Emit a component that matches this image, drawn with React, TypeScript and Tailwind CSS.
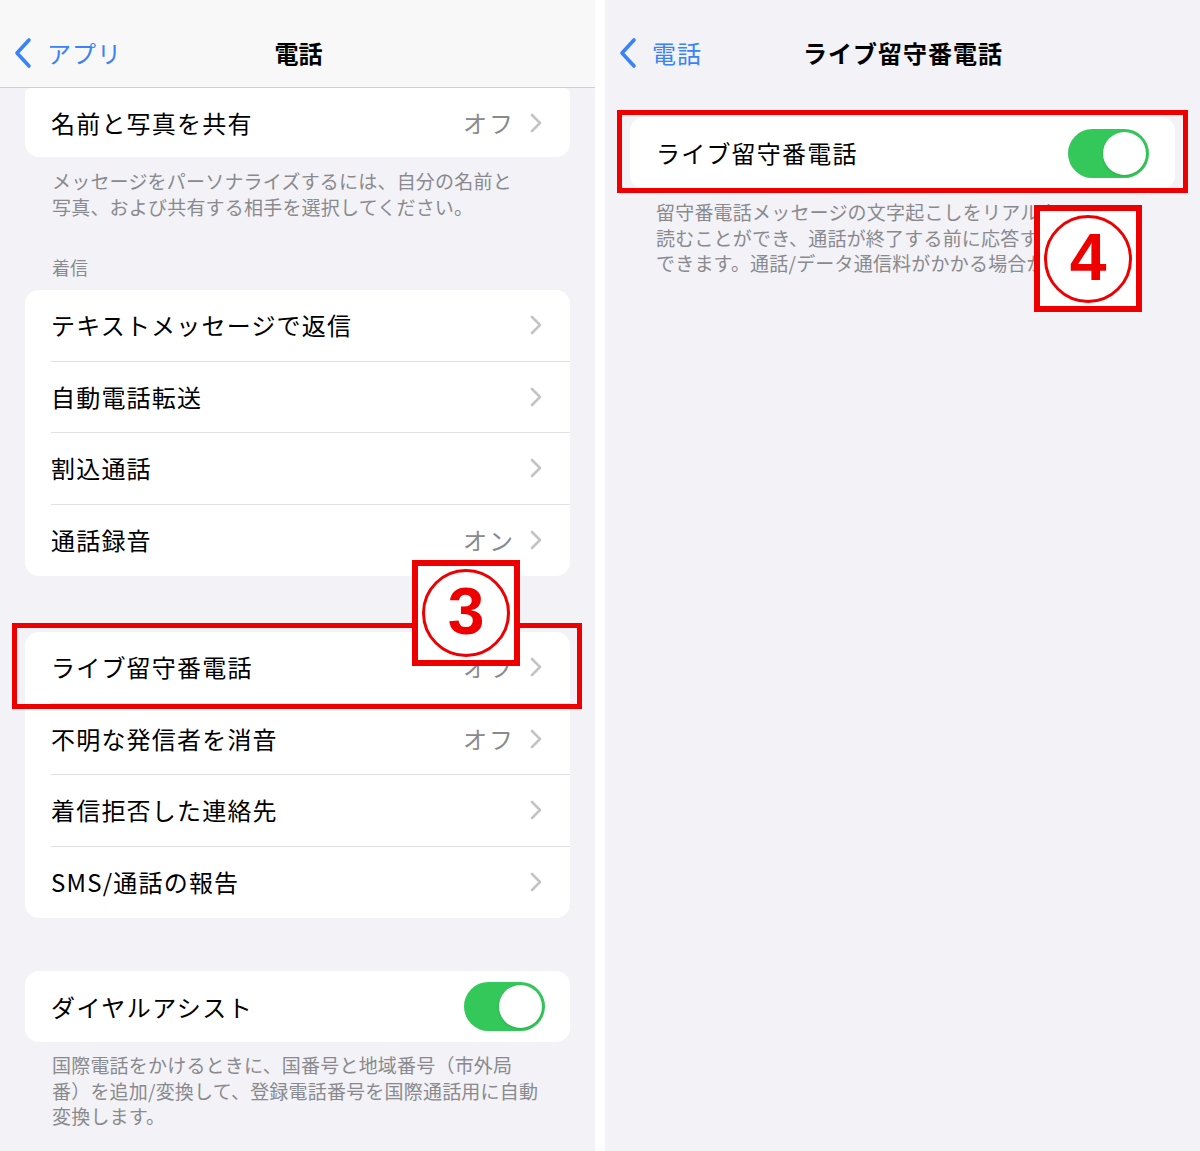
import React from 'react';

const font = { fontFamily: '"Noto Sans CJK JP", "Noto Sans", sans-serif' };

const Chevron = () => (
  <svg width="14" height="22" viewBox="0 0 14 22" className="shrink-0">
    <path d="M3 3l8 8-8 8" fill="none" stroke="#c4c4c7" strokeWidth="2.6" strokeLinecap="round" strokeLinejoin="round" />
  </svg>
);

const BackChevron = () => (
  <svg width="20" height="32" viewBox="0 0 20 32" className="shrink-0">
    <path d="M16 3L4 16l12 13" fill="none" stroke="#3a82f7" strokeWidth="3.6" strokeLinecap="round" strokeLinejoin="round" />
  </svg>
);

const Toggle = () => (
  <div className="w-[81px] h-[49px] rounded-full bg-[#34c759] flex items-center justify-end pr-[3px]">
    <div className="w-[43px] h-[43px] rounded-full bg-white shadow-sm" />
  </div>
);

const Row = ({ label, value, last }: { label: string; value?: string; last?: boolean }) => (
  <div className="flex items-center h-[71.5px] pl-[26px]">
    <div className={`flex flex-1 items-center h-full pr-[27px] ${last ? '' : 'border-b border-[#e2e2e4]'}`}>
      <span className="flex-1 text-[24px] text-black tracking-[1.2px]">{label}</span>
      {value && <span className="text-[24px] text-[#8a8a8e] mr-[14px] tracking-[2px]">{value}</span>}
      <Chevron />
    </div>
  </div>
);

const Badge = ({ n, className }: { n: string; className: string }) => (
  <div className={`absolute bg-white border-[6px] border-[#ee0000] flex items-center justify-center ${className}`}>
    <div className="w-[88px] h-[88px] rounded-full border-[3px] border-[#ee0000] flex items-center justify-center">
      <span className="text-[66px] leading-none font-bold text-[#ee0000] -mt-[4px]" style={{ fontFamily: '"Liberation Sans", Arial, sans-serif' }}>
        {n}
      </span>
    </div>
  </div>
);

const Foot = ({ lines }: { lines: string[] }) => (
  <div className="text-[19px] leading-[25.5px] text-[#8a8a8e] tracking-[0.2px]">
    {lines.map((l) => (
      <div key={l} className="whitespace-nowrap">{l}</div>
    ))}
  </div>
);

export default function App() {
  return (
    <div className="flex w-[1200px] h-[1151px] bg-white overflow-hidden" style={font}>
      {/* left: 電話 settings */}
      <div className="relative w-[595px] h-full bg-[#f2f2f7] flex flex-col">
        <div className="h-[88px] shrink-0 bg-[#f8f8f9] border-b border-[#cfcfd2] flex items-center relative">
          <div className="flex items-center pl-[13px] gap-[14px] mt-[18px]">
            <BackChevron />
            <span className="text-[24px] text-[#3a82f7] tracking-[1px]">アプリ</span>
          </div>
          <span className="absolute left-0 right-0 text-center text-[24px] font-bold text-black mt-[18px] pl-[2px]">電話</span>
        </div>

        <div className="px-[25px]">
          <div className="bg-white rounded-b-[14px] rounded-t-[6px]">
            <div className="flex items-center h-[69px] pl-[26px] pr-[27px]">
              <span className="flex-1 text-[24px] text-black tracking-[1.2px]">名前と写真を共有</span>
              <span className="text-[24px] text-[#8a8a8e] mr-[14px] tracking-[2px]">オフ</span>
              <Chevron />
            </div>
          </div>
          <div className="pl-[27px] pt-[11px]">
            <Foot lines={['メッセージをパーソナライズするには、自分の名前と', '写真、および共有する相手を選択してください。']} />
          </div>

          <div className="pl-[27px] mt-[36px] mb-[11px] text-[18px] leading-[24px] text-[#8a8a8e]">着信</div>
          <div className="bg-white rounded-[14px]">
            <Row label="テキストメッセージで返信" />
            <Row label="自動電話転送" />
            <Row label="割込通話" />
            <Row label="通話録音" value="オン" last />
          </div>

          <div className="bg-white rounded-[14px] mt-[56px]">
            <Row label="ライブ留守番電話" value="オフ" />
            <Row label="不明な発信者を消音" value="オフ" />
            <Row label="着信拒否した連絡先" />
            <Row label="SMS/通話の報告" last />
          </div>

          <div className="bg-white rounded-[14px] mt-[53px] h-[71px] flex items-center pl-[26px] pr-[25px]">
            <span className="flex-1 text-[24px] text-black tracking-[1.5px]">ダイヤルアシスト</span>
            <Toggle />
          </div>
          <div className="pl-[27px] pt-[10px]">
            <Foot lines={['国際電話をかけるときに、国番号と地域番号（市外局', '番）を追加/変換して、登録電話番号を国際通話用に自動', '変換します。']} />
          </div>
        </div>

        <div className="absolute left-[12px] top-[623px] w-[570px] h-[86px] border-[5px] border-[#ee0000]" />
        <Badge n="3" className="left-[412px] top-[560px] w-[108px] h-[106px]" />
      </div>

      <div className="w-[10px] h-full bg-white" />

      {/* right: ライブ留守番電話 */}
      <div className="relative flex-1 h-full bg-[#f2f2f7]">
        <div className="h-[88px] flex items-center relative">
          <div className="flex items-center pl-[13px] gap-[14px] mt-[18px]">
            <BackChevron />
            <span className="text-[24px] text-[#3a82f7] tracking-[1px]">電話</span>
          </div>
          <span className="absolute left-0 right-0 text-center text-[24px] font-bold text-black tracking-[1px] mt-[18px] pl-[1px]">ライブ留守番電話</span>
        </div>
        <div className="px-[25px] pt-[29px]">
          <div className="bg-white rounded-[14px] h-[72px] flex items-center pl-[26px] pr-[26px]">
            <span className="flex-1 text-[24px] text-black tracking-[1.2px]">ライブ留守番電話</span>
            <Toggle />
          </div>
          <div className="pl-[26px] pt-[10px]">
            <Foot lines={['留守番電話メッセージの文字起こしをリアルタイムで', '読むことができ、通話が終了する前に応答することが', 'できます。通話/データ通信料がかかる場合があります。']} />
          </div>
        </div>

        <div className="absolute left-[12px] top-[110px] w-[571px] h-[83px] border-[5px] border-[#ee0000]" />
        <Badge n="4" className="left-[429px] top-[205px] w-[108px] h-[107px]" />
      </div>
    </div>
  );
}
